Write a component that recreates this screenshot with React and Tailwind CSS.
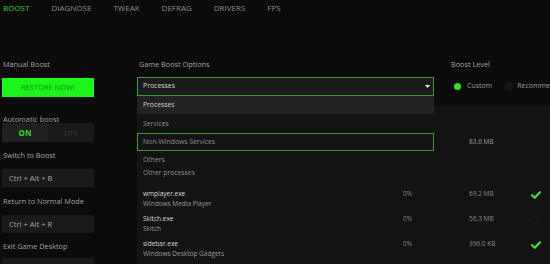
const font = { fontFamily: '"Open Sans", "Noto Sans", sans-serif' }

const nav = ['BOOST', 'DIAGNOSE', 'TWEAK', 'DEFRAG', 'DRIVERS', 'FPS']

const rows = [
  { name: 'wmplayer.exe', desc: 'Windows Media Player', cpu: '0%', mem: '69.2 MB', on: true },
  { name: 'Skitch.exe', desc: 'Skitch', cpu: '0%', mem: '56.3 MB', on: false },
  { name: 'sidebar.exe', desc: 'Windows Desktop Gadgets', cpu: '0%', mem: '396.0 KB', on: true },
]

function Check({ on }) {
  if (!on) return <span className="block h-[8px] w-[8px] border border-[#171717]" />
  return (
    <svg width="10" height="8" viewBox="0 0 10 8">
      <path d="M1 4.2 L3.8 6.8 L9 1.2" fill="none" stroke="#3fe03a" strokeWidth="2.2" strokeLinecap="round" strokeLinejoin="round" />
    </svg>
  )
}

function Label({ children, className = '' }) {
  return <div className={`h-[12px] text-[7.3px] leading-[12px] text-[#a3a3a3] ${className}`}>{children}</div>
}

function KeyBox({ children, className = '' }) {
  return (
    <div className={`h-[18px] bg-[#1a1a1a] pl-[7px] text-[7.6px] leading-[18px] text-[#a8a8a8] ${className}`}>{children}</div>
  )
}

export default function App() {
  return (
    <div className="relative h-[264px] w-[550px] overflow-hidden bg-[#0b0b0b]" style={font}>
      {/* tabs */}
      <div className="flex h-[15px] gap-[22px] pl-[3px] text-[8px] leading-[15px] text-[#8c8c8c]">
        {nav.map((n, i) => (
          <span key={n} className={i === 0 ? 'text-[#2fd12c]' : ''}>{n}</span>
        ))}
      </div>

      <div className="mt-[43px] flex">
        {/* left column */}
        <div className="ml-[2px] w-[92px] shrink-0">
          <Label className="ml-px">Manual Boost</Label>
          <div className="mt-[8px] h-[19px] bg-[#1cf41a] text-center text-[7.5px] leading-[19px] text-[#13931a]">RESTORE NOW!</div>
          <Label className="mt-[16px] ml-px">Automatic boost</Label>
          <div className="-mt-[2px] flex h-[19px] bg-[#191919] text-[8px] font-bold leading-[19px]">
            <span className="w-[46px] bg-[#202020] text-center text-[#36d92f]">ON</span>
            <span className="flex-1 text-center font-normal text-[#3a3a3a]">OFF</span>
          </div>
          <Label className="mt-[7px] ml-px">Switch to Boost</Label>
          <KeyBox className="mt-[8px]">Ctrl + Alt + B</KeyBox>
          <Label className="mt-[8px] ml-px">Return to Normal Mode</Label>
          <KeyBox className="mt-[8px]">Ctrl + Alt + R</KeyBox>
          <Label className="mt-[7px] ml-px">Exit Game Desktop</Label>
          <KeyBox className="mt-[6px]" />
        </div>

        {/* right region */}
        <div className="relative ml-[43px] flex-1">
          <div className="flex">
            <div className="w-[297px]">
              <Label className="ml-[2px]">Game Boost Options</Label>
              <div className="mt-[7px] flex h-[19px] items-center justify-between border border-[#3b9a2c] bg-[#1b1b1b] pl-[5px] pr-[3px] text-[6.9px] text-[#d6d6d6]">
                <span>Processes</span>
                <svg width="5" height="3" viewBox="0 0 5 3"><path d="M0 0 H5 L2.5 3 Z" fill="#f0f0f0" /></svg>
              </div>
            </div>
            <div className="ml-[17px] flex-1">
              <Label>Boost Level</Label>
              <div className="mt-[11px] flex items-center text-[7px] text-[#9c9c9c]">
                <span className="ml-[3px] h-[7px] w-[7px] rounded-full bg-[#22e81c]" />
                <span className="ml-[6px]">Custom</span>
                <span className="ml-[12px] h-[9px] w-[9px] rounded-full bg-[#161616]" />
                <span className="ml-[4px] whitespace-nowrap">Recommended</span>
              </div>
            </div>
          </div>

          {/* process panel */}
          <div className="mt-[10px] h-[158px] bg-[#131313] text-[6.5px]">
            <div className="h-[31px]" />
            <div className="flex h-[10px] items-center text-[#9a9a9a]">
              <span className="ml-[332px]">83.6 MB</span>
              <span className="ml-auto mr-[10px]"><Check on={false} /></span>
            </div>
            <div className="mt-[20px] pl-[6px] text-[6.8px] leading-[12px] text-[#8e8e8e]">Other processes</div>
            <div className="mt-[10px]">
              {rows.map(r => (
                <div key={r.name} className="flex h-[25px]">
                  <div className="w-[266px] pl-[6px]">
                    <div className="h-[10px] leading-[10px] text-[#d8d8d8]">{r.name}</div>
                    <div className="h-[9px] leading-[9px] text-[#9a9a9a]">{r.desc}</div>
                  </div>
                  <div className="w-[66px] leading-[10px] text-[#8a8a8a]">{r.cpu}</div>
                  <div className="w-[62px] leading-[10px] text-[#8a8a8a]">{r.mem}</div>
                  <div className="pt-[2px]"><Check on={r.on} /></div>
                </div>
              ))}
            </div>
          </div>

          {/* open dropdown list */}
          <div className="absolute left-0 top-[38px] w-[297px] bg-[#131313] text-[6.8px] text-[#8e8e8e]">
            <div className="h-[18px] bg-[#222222] pl-[6px] leading-[18px] text-[#cfcfcf]">Processes</div>
            <div className="h-[19px] pl-[6px] leading-[19px]">Services</div>
            <div className="h-[18px] border border-[#3b9a2c] pl-[5px] leading-[16px]">Non-Windows Services</div>
            <div className="h-[18px] pl-[6px] leading-[18px]">Others</div>
          </div>
        </div>
      </div>
    </div>
  )
}
